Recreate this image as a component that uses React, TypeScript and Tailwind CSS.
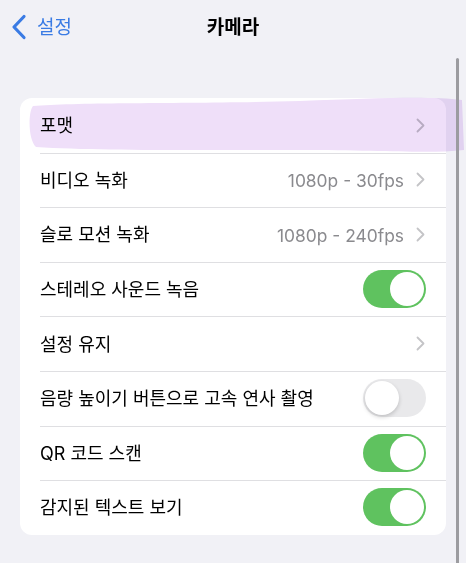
import React from "react";

const font = { fontFamily: 'Inter, "Noto Sans CJK KR", "Noto Sans", sans-serif' };

function Chevron() {
  return (
    <svg width="9" height="15" viewBox="0 0 9 15" className="ml-[12px] shrink-0">
      <path d="M1.5 1.5 L7.5 7.5 L1.5 13.5" fill="none" stroke="#c4c4c7" strokeWidth="1.8" strokeLinecap="round" strokeLinejoin="round" />
    </svg>
  );
}

function Toggle({ on }: { on: boolean }) {
  return (
    <div
      className={`relative w-[63px] h-[38px] rounded-full ${on ? "bg-[#5fc25f]" : "bg-[#e9e9eb]"}`}
    >
      <div
        className={`absolute top-[2px] w-[34px] h-[34px] rounded-full bg-white ${on ? "right-[2px]" : "left-[2px] shadow-[0_2px_4px_rgba(0,0,0,0.18)]"}`}
      />
    </div>
  );
}

type Row = { label: string; value?: string; chevron?: boolean; toggle?: boolean };

const rows: Row[] = [
  { label: "포맷", chevron: true },
  { label: "비디오 녹화", value: "1080p - 30fps", chevron: true },
  { label: "슬로 모션 녹화", value: "1080p - 240fps", chevron: true },
  { label: "스테레오 사운드 녹음", toggle: true },
  { label: "설정 유지", chevron: true },
  { label: "음량 높이기 버튼으로 고속 연사 촬영", toggle: false },
  { label: "QR 코드 스캔", toggle: true },
  { label: "감지된 텍스트 보기", toggle: true },
];

export default function App() {
  return (
    <div className="relative w-[466px] h-[563px] overflow-hidden bg-[#f1f1f6]" style={font}>
      {/* nav bar */}
      <div className="relative h-[54px] flex items-center">
        <div className="flex items-center pl-[11px] text-[#3a7be4]">
          <svg width="16" height="26" viewBox="0 0 16 26">
            <path d="M13 2.5 L3 13 L13 23.5" fill="none" stroke="#3a7be4" strokeWidth="3.2" strokeLinecap="round" strokeLinejoin="round" />
          </svg>
          <span className="ml-[10px] text-[19px] leading-none">설정</span>
        </div>
        <div className="absolute left-0 right-0 top-0 h-[54px] flex items-center justify-center pointer-events-none">
          <span className="text-[19px] font-bold text-black leading-none">카메라</span>
        </div>
      </div>

      {/* card */}
      <div className="mt-[44px] ml-[20px] w-[426px] bg-white rounded-[12px] overflow-hidden">
        {rows.map((r, i) => (
          <div key={i} className="pl-[20px] h-[54.6px] relative flex items-center">
            {i > 0 && <div className="absolute top-0 left-[20px] right-0 h-px bg-[#dfdfe2]" />}
            <span className="text-[18px] text-black flex-1 leading-none translate-y-[1px]">{r.label}</span>
            {r.value && <span className="text-[17.4px] text-[#8a8a8e] leading-none translate-y-[1px]">{r.value}</span>}
            {r.chevron && <div className="mr-[21px]"><Chevron /></div>}
            {r.toggle !== undefined && (
              <div className="mr-[20px]"><Toggle on={r.toggle} /></div>
            )}
          </div>
        ))}
      </div>

      {/* highlight stroke */}
      <svg className="absolute left-0 top-0 pointer-events-none mix-blend-multiply" width="466" height="563">
        <path
          d="M33 106 C 80 102, 200 104, 300 101 C 380 98, 430 96, 462 100 L 464 150 C 430 154, 380 150, 300 150 C 200 150, 100 151, 36 147 C 28 140, 28 112, 33 106 Z"
          fill="#efdff9"
        />
      </svg>

      {/* scrollbar */}
      <div className="absolute left-[456px] top-[58px] w-[3px] h-[520px] rounded-full bg-[#9c9ca0]" />
    </div>
  );
}
